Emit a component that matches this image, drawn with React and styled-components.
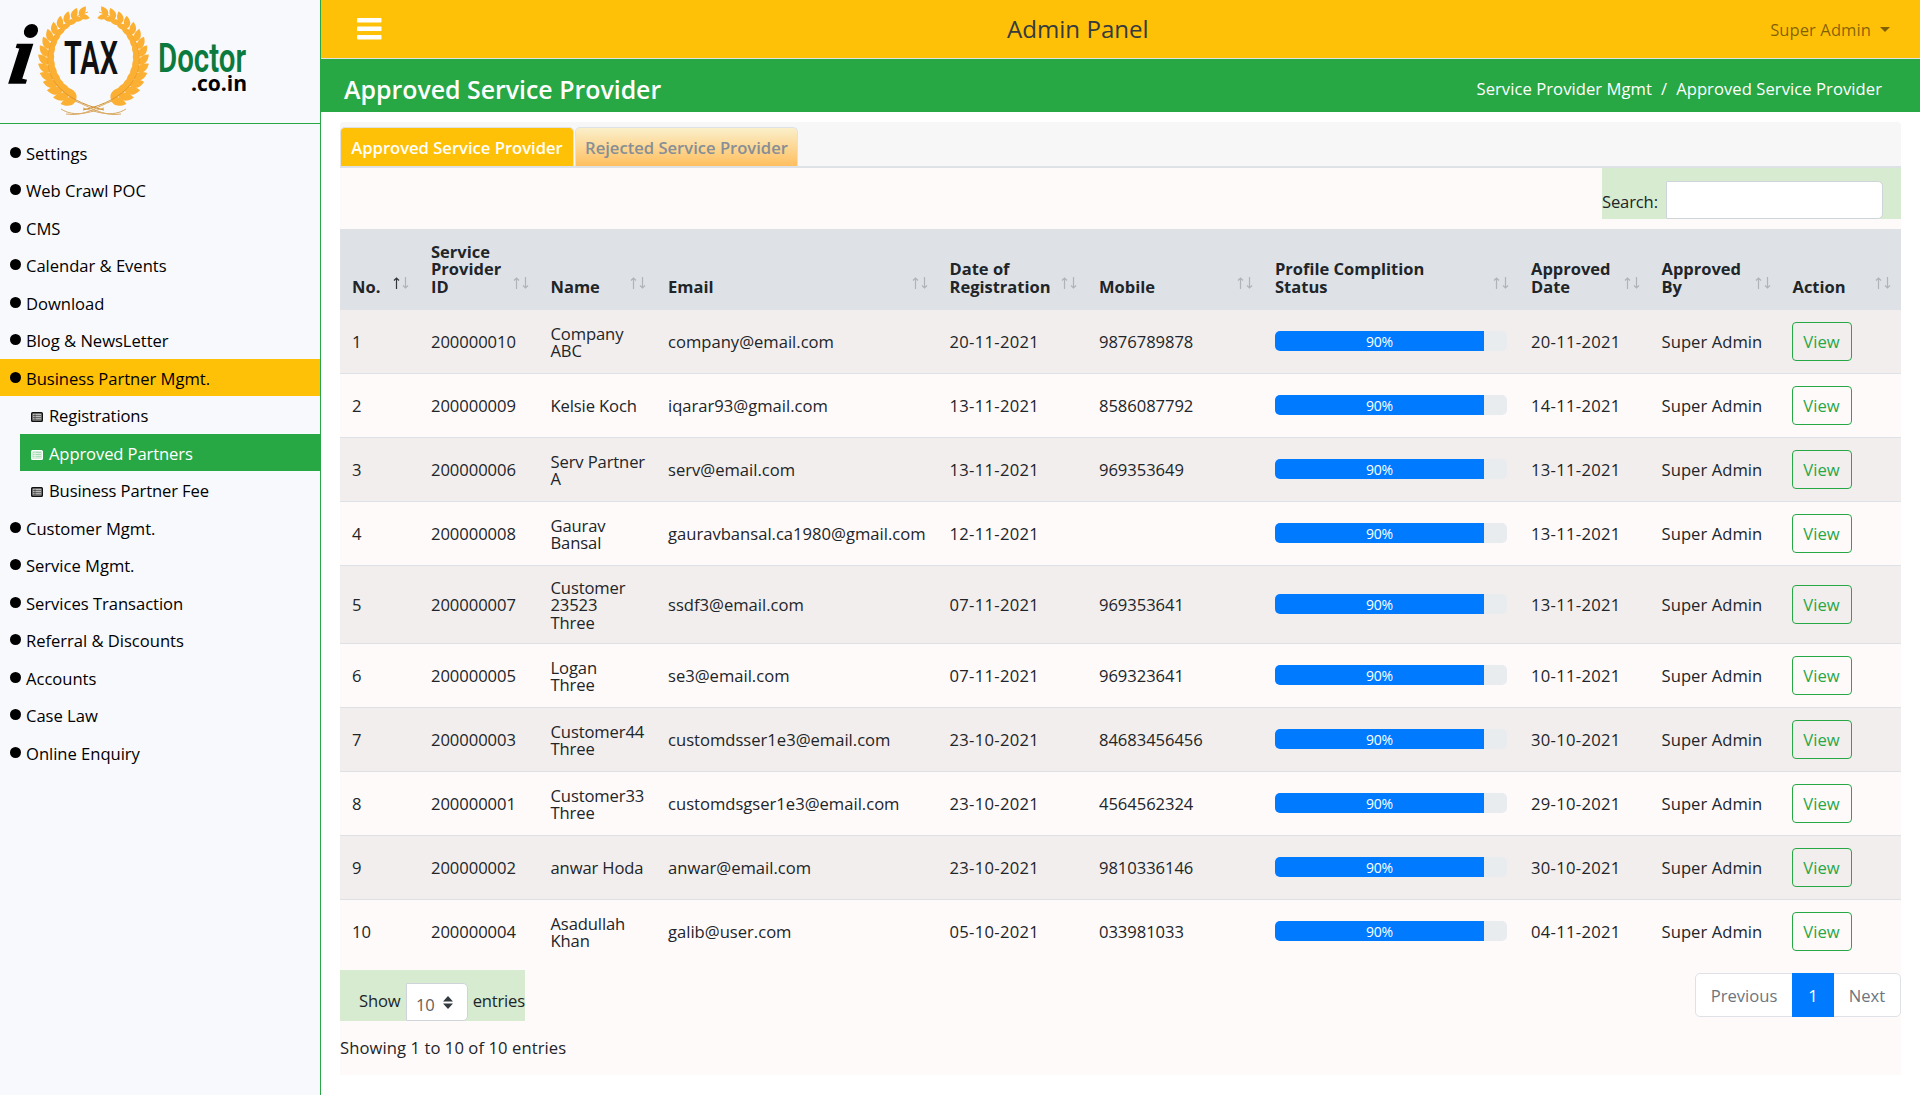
import React from "react";
import styled, { createGlobalStyle, css } from "styled-components";

const Global = createGlobalStyle`
  * { box-sizing: border-box; }
  body { margin: 0; background: #fff; color: #212529; font: 400 16.6px/1.5 "Open Sans", "Noto Sans", sans-serif; }
`;

const Page = styled.div`display: flex; height: 1095px; overflow: hidden;`;

const Sidebar = styled.aside`
  width: 321px; flex: none; background: #f8f9fc; border-right: 1px solid #28a745; color: #000;
`;
const LogoBox = styled.div`height: 124px; border-bottom: 1px solid #28a745; svg { display: block; }`;
const Menu = styled.nav`padding-top: 10px;`;
const MenuItem = styled.a`
  display: flex; align-items: center; height: 37px; margin-bottom: 0.5px;
  padding-left: 10px; letter-spacing: -0.03px; line-height: 37px; white-space: nowrap;
  background: ${(p) => (p.$active ? "#ffc107" : "transparent")};
  > b { font-weight: 400; padding-top: 1px; }
`;
const Dot = styled.span`
  width: 11px; height: 11px; border-radius: 50%; background: #000; margin-right: 5px; margin-top: -1px;
`;
const SubItem = styled(MenuItem)`
  margin-left: 20px; padding-left: 11px; letter-spacing: -0.12px;
  background: ${(p) => (p.$active ? "#28a745" : "transparent")};
  color: ${(p) => (p.$active ? "#fff" : "#000")};
  svg { margin-right: 6px; margin-top: 4px; }
`;

const Main = styled.main`flex: 1; min-width: 0;`;
const TopBar = styled.header`
  height: 59px; background: #ffc107; border-bottom: 1px solid #dee2e6;
  display: grid; grid-template-columns: 1fr 232px 1fr; align-items: center; padding: 0 30px 0 35px;
`;
const PanelTitle = styled.div`font-size: 24.1px; font-weight: 500; color: #343a40; padding-top: 1px; white-space: nowrap;`;
const UserMenu = styled.div`
  display: flex; align-items: center; justify-content: flex-end; gap: 9px; color: rgba(0, 0, 0, 0.5); padding-top: 2px;
  letter-spacing: .06px;
`;
const Caret = styled.span`border: 5px solid transparent; border-top-color: rgba(0,0,0,.5); border-bottom: 0;`;
const TitleBar = styled.div`
  height: 53px; background: #28a745; color: #fff; display: flex; align-items: center;
  justify-content: space-between; padding: 7px 38px 0 23px;
`;
const Title = styled.h1`margin: 0; font-size: 24.9px; font-weight: 600; line-height: 30px; margin-top: -1px;`;
const Crumbs = styled.div`display: flex; gap: 9px; line-height: 24px; letter-spacing: .06px; margin-top: -1px;`;

const Card = styled.section`margin: 10px 19px 0 19px; height: 953px; background: #fffafa;border-radius: 4px 4px 0 0;`;
const Tabs = styled.div`
  height: 46px; padding: 5px 0 0 0; background: #f7f7f7; border-bottom: 2px solid #dee2e6;
  border-radius: 4px 4px 0 0; display: flex; gap: 1px;
`;
const Tab = styled.div`
  height: 39px; border: 1px solid #dee2e6; border-bottom: 0; border-radius: 5px 5px 0 0;
  font-weight: 600; line-height: 39px; text-align: center; white-space: nowrap;
  width: ${(p) => p.$w}px;
  ${(p) => p.$active
    ? css`background: #ffc107; color: #fff;`
    : css`background: linear-gradient(#faefca, #ffbf60); color: #868e96;`}
`;
const SearchRow = styled.div`display: flex; justify-content: flex-end; height: 61px;`;
const SearchBox = styled.label`
  width: 299px; height: 51px; background: #d6ebd0; display: flex; align-items: flex-end; justify-content: space-between;
  padding-right: 18px; line-height: 24px; letter-spacing: -.15px;
  span { padding-bottom: 5px; }
`;
const Input = styled.input`
  width: 217px; height: 38px; border: 1px solid #ced4da; border-radius: 1px 5px 5px 1px; background: #fff; outline: none;
`;

const Table = styled.table`
  width: 1561px; table-layout: fixed; border-collapse: separate; border-spacing: 0; line-height: 17.6px;
`;
const Th = styled.th`
  height: 80px; padding: 0 10px 13.5px 12px; background: #dee2e6; vertical-align: bottom; text-align: left; font-weight: 700;
  font-size: 16.5px;
`;
const ThInner = styled.div`
  display: flex; align-items: flex-end; justify-content: space-between;
  span { white-space: pre; }
  svg { flex: none; margin-bottom: 6.5px; }
`;
const Tr = styled.tr`
  height: ${(p) => (p.$tall ? 78 : 64)}px;
  background: ${(p) => (p.$odd ? "#f2eeed" : "#fffafa")};
`;
const Td = styled.td`
  border-top: 1px solid #dee2e6; padding: 1.5px 0 0 12px; vertical-align: middle; white-space: pre-line;
  letter-spacing: ${(p) => p.$ls || 0}px;
`;
const Progress = styled.div`
  width: 232px; height: 20px; border-radius: 5px; background: #e9ecef; overflow: hidden; margin-top: -3px;
`;
const Fill = styled.div`
  height: 100%; background: #007bff; color: #fff; font-size: 14px; line-height: 21px; text-align: center; letter-spacing: -.2px;
`;
const ViewButton = styled.button`
  display: block; width: 60px; height: 39px; margin: -1.5px 0 0 -1px; padding: 0; border: 1px solid #28a745; border-radius: 4px;
  background: transparent; color: #28a745; font: inherit; line-height: 36px;
`;

const Footer = styled.div`display: flex; justify-content: space-between; align-items: flex-start; padding-top: 7px;`;
const LengthBox = styled.div`
  height: 51px; width: 185px; background: #d6ebd0; display: flex; align-items: flex-end; padding-left: 19px; line-height: 24px;
  justify-content: space-between; letter-spacing: -.18px;
  span { padding-bottom: 8px; }
`;
const Select = styled.div`
  width: 62px; height: 38px; background: #fff; border: 1px solid #ced4da; border-radius: 1px 5px 5px 1px; color: #6c6059;
  display: flex; align-items: center; padding: 5px 0 0 9px; gap: 8px; margin-left: 1px;
  svg { margin-top: -5px; }
`;
const Pager = styled.div`
  display: flex; margin-top: 3px; height: 44px; line-height: 43px; border: 1px solid #dee2e6; border-radius: 5px; background: #fff;
  color: #6c757d; text-align: center;
`;
const PageLink = styled.span`
  width: ${(p) => p.$w}px;
  ${(p) => p.$active && css`background: #007bff; color: #fff; margin: -1px 0;line-height: 45px;`}
`;
const Info = styled.div`margin-top: 14px; line-height: 26px; letter-spacing: .08px;`;

const Leaf = ({ x, y, a, s = 1 }) => (
  <path d="M0 0C2-5 8-6 14-1 9 4 3 4 0 0Z" transform={`translate(${x} ${y}) rotate(${a}) scale(${s})`} />
);
const Branch = () => {
  const leaves = [];
  for (let i = 0; i < 15; i++) {
    const deg = 112 + i * 10;
    const t = deg * (Math.PI / 180);
    const x = 93.5 + Math.cos(t) * (45 + (i < 3 ? 1 : 0));
    const y = 58 + Math.sin(t) * 44;
    const dir = deg + 90;
    const s = 1.18 - i * 0.025;
    leaves.push(<Leaf key={`o${i}`} x={x} y={y} a={dir - 36} s={s} />);
    leaves.push(<Leaf key={`n${i}`} x={x} y={y} a={dir + 32} s={s * 0.88} />);
  }
  return (
    <g>
      {leaves}
      <path d="M104 110C60 100 38 74 52 41 60 26 72 17 88 12" fill="none" stroke="url(#gold)" strokeWidth="1" />
    </g>
  );
};
const Logo = () => (
  <svg width="320" height="123" viewBox="0 0 320 123">
    <defs>
      <linearGradient id="gold" gradientUnits="userSpaceOnUse" x1="0" y1="8" x2="0" y2="115">
        <stop offset="0" stopColor="#fbb034" /><stop offset=".6" stopColor="#f0a127" /><stop offset="1" stopColor="#c98a2e" />
      </linearGradient>
    </defs>
    <g fill="url(#gold)">
      <Branch />
      <g transform="translate(187 0) scale(-1 1)"><Branch /></g>
    </g>
    <g fill="none" stroke="#d9a860" strokeWidth="1">
      <path d="M61 109C75 118 90 112 104 108M126 109C112 118 97 112 83 108M66 114C85 117 98 106 112 101M121 114C102 117 89 106 75 101" />
    </g>
    <text transform="translate(7 83) skewX(-8)" fontFamily="Liberation Serif" fontWeight="700" fontStyle="italic" fontSize="84" stroke="#000" strokeWidth="1.500" fill="#000">i</text>
    <text x="64" y="74" fontFamily="Roboto" fontWeight="600" fontSize="46" textLength="54" lengthAdjust="spacingAndGlyphs" fill="#111">TAX</text>
    <text x="158" y="72" fontFamily="Roboto" fontWeight="600" fontSize="41.5" textLength="88" lengthAdjust="spacingAndGlyphs" fill="#0b7a3e">Doctor</text>
    <text x="191" y="91" fontFamily="Open Sans" fontWeight="700" fontSize="22" textLength="56" lengthAdjust="spacingAndGlyphs" fill="#000">.co.in</text>
  </svg>
);

const ListIcon = ({ light }) => (
  <svg width="12" height="10" viewBox="0 0 12 10">
    <rect x=".75" y=".75" width="10.500" height="8.500" rx=".8" fill={light ? "#a8dcb4" : "#bbb"} stroke={light ? "#fff" : "#111"} strokeWidth="1.500" />
    <path d="M2 3.500h8M2 5.500h8M2 7.300h8M4 2v6" stroke={light ? "#fff" : "#333"} strokeWidth=".6" />
  </svg>
);
const Bars = () => (
  <svg width="26" height="24" viewBox="0 0 26 24">
    <g fill="#fff"><rect x="1" y="1" width="24.500" height="4.500" rx=".7" /><rect x="1" y="9.500" width="24.500" height="4.500" rx=".7" /><rect x="1" y="18" width="24.500" height="4.500" rx=".7" /></g>
  </svg>
);
const Sort = ({ asc }) => (
  <svg width="16" height="12" viewBox="0 0 16 12" fill="none">
    <path d="M3.500 12V1M1 3.500 3.500 1 6 3.500" stroke={asc ? "#33373b" : "#b0b4b8"} strokeWidth="1.200" />
    <path d="M12.500 0V11M10 8.500l2.500 2.500 2.500-2.500" stroke="#b0b4b8" strokeWidth="1.200" />
  </svg>
);

const menu = [
  ["Settings"], ["Web Crawl POC"], ["CMS"], ["Calendar & Events"], ["Download"], ["Blog & NewsLetter"],
  ["Business Partner Mgmt.", "active"], ["Registrations", "sub"], ["Approved Partners", "subActive"],
  ["Business Partner Fee", "sub"], ["Customer Mgmt."], ["Service Mgmt."], ["Services Transaction"],
  ["Referral & Discounts"], ["Accounts"], ["Case Law"], ["Online Enquiry"],
];
const columns = [
  ["No.", 79], ["Service\nProvider\nID", 119.5], ["Name", 117.5], ["Email", 281.5], ["Date of\nRegistration", 149.5],
  ["Mobile", 176], ["Profile Complition\nStatus", 256], ["Approved\nDate", 130.5], ["Approved\nBy", 131], ["Action", 120.5],
];
const rows = [
  ["200000010", "Company\nABC", "company@email.com", "20-11-2021", "9876789878", "20-11-2021"],
  ["200000009", "Kelsie Koch", "iqarar93@gmail.com", "13-11-2021", "8586087792", "14-11-2021"],
  ["200000006", "Serv Partner\nA", "serv@email.com", "13-11-2021", "969353649", "13-11-2021"],
  ["200000008", "Gaurav\nBansal", "gauravbansal.ca1980@gmail.com", "12-11-2021", "", "13-11-2021"],
  ["200000007", "Customer\n23523\nThree", "ssdf3@email.com", "07-11-2021", "969353641", "13-11-2021"],
  ["200000005", "Logan\nThree", "se3@email.com", "07-11-2021", "969323641", "10-11-2021"],
  ["200000003", "Customer44\nThree", "customdsser1e3@email.com", "23-10-2021", "84683456456", "30-10-2021"],
  ["200000001", "Customer33\nThree", "customdsgser1e3@email.com", "23-10-2021", "4564562324", "29-10-2021"],
  ["200000002", "anwar Hoda", "anwar@email.com", "23-10-2021", "9810336146", "30-10-2021"],
  ["200000004", "Asadullah\nKhan", "galib@user.com", "05-10-2021", "033981033", "04-11-2021"],
];

export default function App() {
  return (
    <Page>
      <Global />
      <Sidebar>
        <LogoBox><Logo /></LogoBox>
        <Menu>
          {menu.map(([label, kind]) =>
            kind && kind.startsWith("sub") ? (
              <SubItem key={label} $active={kind === "subActive"}><ListIcon light={kind === "subActive"} /><b>{label}</b></SubItem>
            ) : (
              <MenuItem key={label} $active={kind === "active"}><Dot /><b>{label}</b></MenuItem>
            )
          )}
        </Menu>
      </Sidebar>
      <Main>
        <TopBar><Bars /><PanelTitle>Admin Panel</PanelTitle><UserMenu>Super Admin<Caret /></UserMenu></TopBar>
        <TitleBar>
          <Title>Approved Service Provider</Title>
          <Crumbs><span>Service Provider Mgmt</span><span>/</span><span>Approved Service Provider</span></Crumbs>
        </TitleBar>
        <Card>
          <Tabs><Tab $active $w={234}>Approved Service Provider</Tab><Tab $w={223}>Rejected Service Provider</Tab></Tabs>
          <SearchRow><SearchBox><span>Search:</span><Input /></SearchBox></SearchRow>
          <Table>
            <colgroup>{columns.map(([c, w]) => <col key={c} width={w} />)}</colgroup>
            <thead>
              <tr>{columns.map(([c], i) => <Th key={c}><ThInner><span>{c}</span><Sort asc={i === 0} /></ThInner></Th>)}</tr>
            </thead>
            <tbody>
              {rows.map(([id, name, email, reg, mobile, approved], i) => (
                <Tr key={id} $odd={i % 2 === 0} $tall={i === 4}>
                  <Td>{i + 1}</Td><Td $ls={-0.06}>{id}</Td><Td $ls={-0.12}>{name}</Td><Td>{email}</Td>
                  <Td $ls={0.3}>{reg}</Td><Td $ls={-0.06}>{mobile}</Td>
                  <Td><Progress><Fill style={{ width: "90%" }}>90%</Fill></Progress></Td>
                  <Td $ls={0.3}>{approved}</Td><Td $ls={0.05}>Super Admin</Td><Td><ViewButton>View</ViewButton></Td>
                </Tr>
              ))}
            </tbody>
          </Table>
          <Footer>
            <LengthBox><span>Show</span>
              <Select>10<svg width="10" height="13" viewBox="0 0 10 13"><path d="M5 0l5 5.500H0zM0 7.500h10L5 13z" fill="#343a40" /></svg></Select>
              <span>entries</span>
            </LengthBox>
            <Pager><PageLink $w={96}>Previous</PageLink><PageLink $w={42} $active>1</PageLink><PageLink $w={66}>Next</PageLink></Pager>
          </Footer>
          <Info>Showing 1 to 10 of 10 entries</Info>
        </Card>
      </Main>
    </Page>
  );
}
